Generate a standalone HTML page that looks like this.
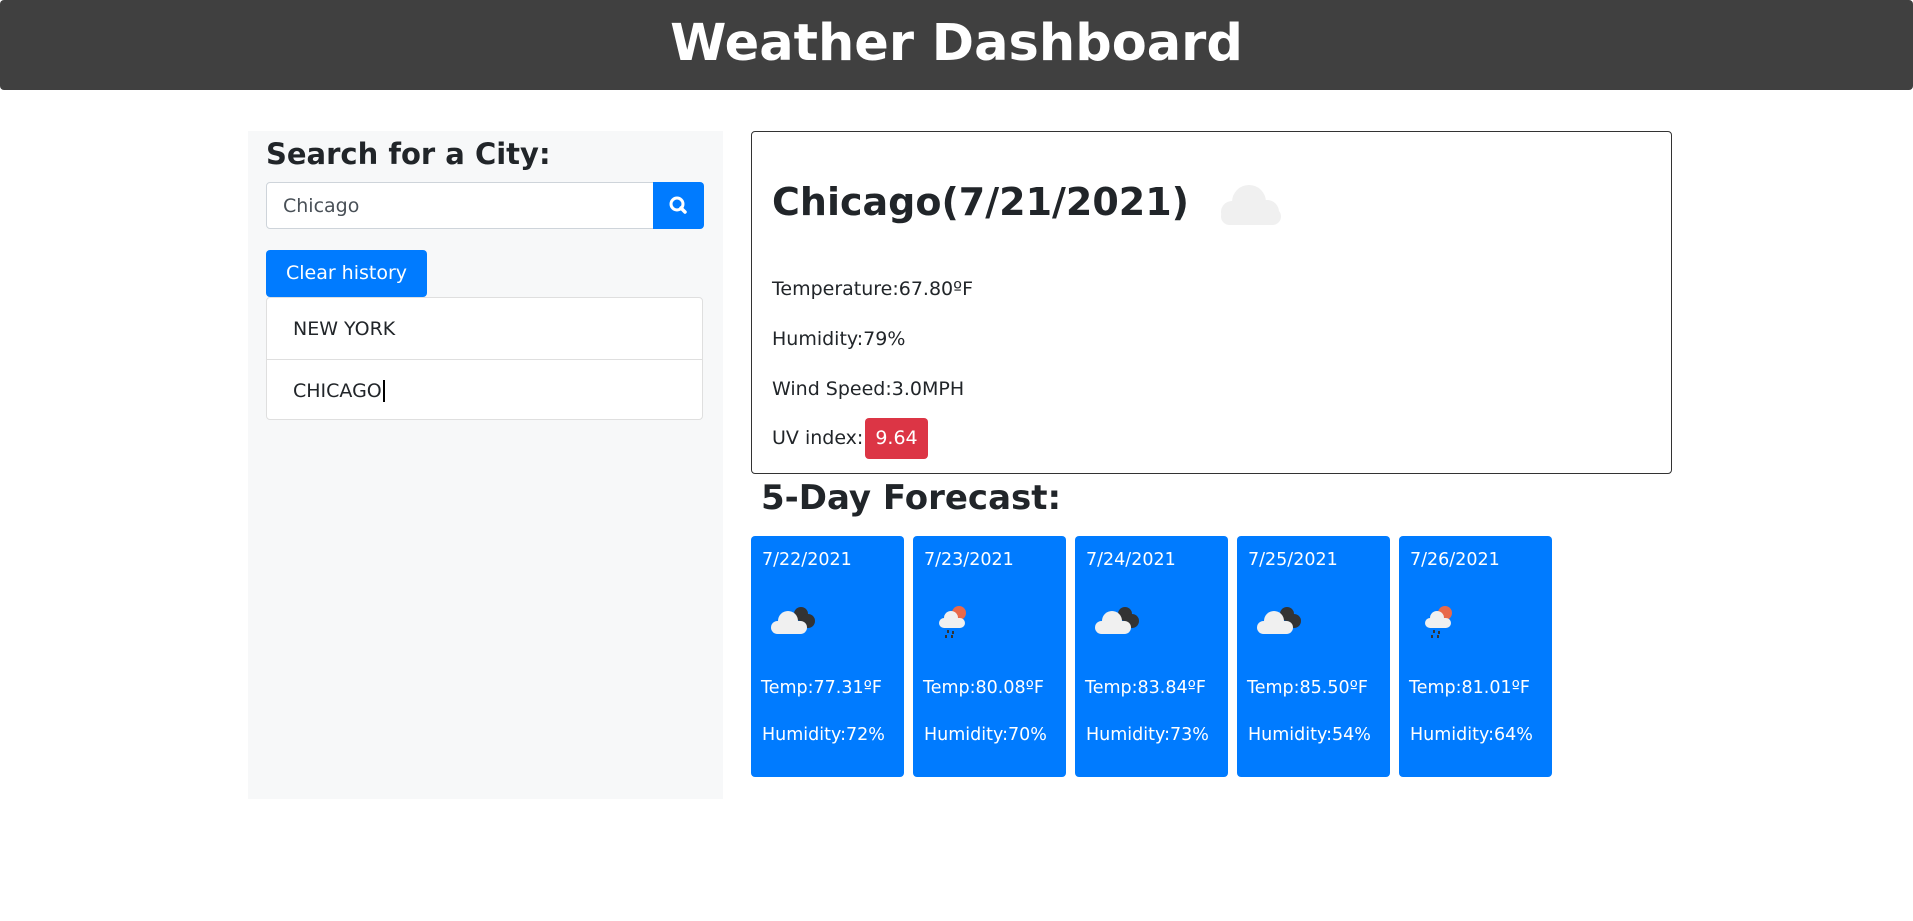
<!DOCTYPE html>
<html><head><meta charset="utf-8"><style>
*{box-sizing:border-box;margin:0;padding:0}
body{width:1913px;height:921px;background:#fff;font-family:"DejaVu Sans","Liberation Sans",sans-serif;color:#212529;position:relative;overflow:hidden}
.hdr{position:absolute;left:0;top:0;width:1913px;height:90px;background:#404040;border-radius:4px;color:#fff;text-align:center;font-weight:bold;font-size:51px;line-height:88px}
.side{position:absolute;left:248px;top:131px;width:475px;height:668px;background:#f7f8f9}
.side h3{position:absolute;left:18px;top:6px;font-size:29px;font-weight:bold}
.inp{position:absolute;left:18px;top:51px;width:388px;height:47px;background:#fff;border:1px solid #ced4da;border-radius:4px 0 0 4px;font-size:19px;line-height:46px;padding-left:16px;color:#495057}
.sb{position:absolute;left:405px;top:51px;width:51px;height:47px;background:#007bff;border-radius:0 4px 4px 0}
.clr{position:absolute;left:18px;top:119px;width:161px;height:47px;background:#007bff;border-radius:4px;color:#fff;font-size:19px;line-height:46px;text-align:center}
.list{position:absolute;left:18px;top:166px;width:437px;height:123px;background:#fff;border:1px solid #dfdfdf;border-radius:4px}
.list div{height:61px;line-height:62px;padding-left:26px;font-size:19px}
.list div+div{border-top:1px solid #dfdfdf}
.main{position:absolute;left:751px;top:131px;width:921px;height:343px;border:1px solid #333;border-radius:4px}
.main h2{position:absolute;left:20px;top:48px;font-size:38px;font-weight:bold}
.main p{position:absolute;left:20px;font-size:19px}
.uv{display:inline-block;background:#dc3545;color:#fff;border-radius:4px;padding:0 10px;height:41px;line-height:41px;margin-left:2px}
.fh{position:absolute;left:761px;top:478px;font-size:34px;font-weight:bold}
.card{position:absolute;top:536px;width:153px;height:241px;background:#007bff;border-radius:4px;color:#fff;font-size:17.5px}
.card .d{position:absolute;left:11px;top:14px}
.card .t{position:absolute;left:10px;top:142px}
.card .h{position:absolute;left:11px;top:189px}
.card svg{position:absolute;left:14px;top:64px}
</style></head><body>
<div class="hdr">Weather Dashboard</div>
<div class="side">
<h3>Search for a City:</h3>
<div class="inp">Chicago</div>
<div class="sb"><svg width="51" height="47"><circle cx="24" cy="22" r="6" fill="none" stroke="#fff" stroke-width="3"/><line x1="28" y1="26" x2="32" y2="30" stroke="#fff" stroke-width="3.5" stroke-linecap="round"/></svg></div>
<div class="clr">Clear history</div>
<div class="list"><div>NEW YORK</div><div>CHICAGO<span style="border-left:2px solid #000;margin-left:1px"></span></div></div>
</div>
<div class="main">
<h2>Chicago(7/21/2021)</h2>
<svg style="position:absolute;left:455px;top:40px" width="90" height="70"><g fill="#f0f0f0"><circle cx="42" cy="30" r="17"/><circle cx="25" cy="40" r="11"/><circle cx="60" cy="40" r="12"/><rect x="14" y="36" width="60" height="17" rx="8.5"/></g></svg>
<p style="top:146px">Temperature:67.80ºF</p>
<p style="top:196px">Humidity:79%</p>
<p style="top:246px">Wind Speed:3.0MPH</p>
<p style="top:286px;line-height:41px">UV index:<span class="uv">9.64</span></p>
</div>
<div class="fh">5-Day Forecast:</div>
<div class="card" style="left:751px"><div class="d">7/22/2021</div><svg width="56" height="46"><g fill="#333"><circle cx="36" cy="14" r="7"/><circle cx="43" cy="21" r="7"/></g><g fill="#f0f0f0"><circle cx="23" cy="21" r="10"/><rect x="6" y="21" width="36" height="13" rx="6.5"/></g></svg><div class="t">Temp:77.31ºF</div><div class="h">Humidity:72%</div></div>
<div class="card" style="left:913px"><div class="d">7/23/2021</div><svg width="56" height="46"><circle cx="32" cy="13" r="7" fill="#e8694a"/><g fill="#f0f0f0"><circle cx="24" cy="18" r="7"/><rect x="12" y="18" width="26" height="10" rx="5"/></g><g fill="#333"><rect x="20" y="30" width="2" height="3"/><rect x="25" y="31" width="2" height="3"/><rect x="18" y="35" width="2" height="3"/><rect x="24" y="35" width="2" height="3"/></g></svg><div class="t">Temp:80.08ºF</div><div class="h">Humidity:70%</div></div>
<div class="card" style="left:1075px"><div class="d">7/24/2021</div><svg width="56" height="46"><g fill="#333"><circle cx="36" cy="14" r="7"/><circle cx="43" cy="21" r="7"/></g><g fill="#f0f0f0"><circle cx="23" cy="21" r="10"/><rect x="6" y="21" width="36" height="13" rx="6.5"/></g></svg><div class="t">Temp:83.84ºF</div><div class="h">Humidity:73%</div></div>
<div class="card" style="left:1237px"><div class="d">7/25/2021</div><svg width="56" height="46"><g fill="#333"><circle cx="36" cy="14" r="7"/><circle cx="43" cy="21" r="7"/></g><g fill="#f0f0f0"><circle cx="23" cy="21" r="10"/><rect x="6" y="21" width="36" height="13" rx="6.5"/></g></svg><div class="t">Temp:85.50ºF</div><div class="h">Humidity:54%</div></div>
<div class="card" style="left:1399px"><div class="d">7/26/2021</div><svg width="56" height="46"><circle cx="32" cy="13" r="7" fill="#e8694a"/><g fill="#f0f0f0"><circle cx="24" cy="18" r="7"/><rect x="12" y="18" width="26" height="10" rx="5"/></g><g fill="#333"><rect x="20" y="30" width="2" height="3"/><rect x="25" y="31" width="2" height="3"/><rect x="18" y="35" width="2" height="3"/><rect x="24" y="35" width="2" height="3"/></g></svg><div class="t">Temp:81.01ºF</div><div class="h">Humidity:64%</div></div>
</body></html>
